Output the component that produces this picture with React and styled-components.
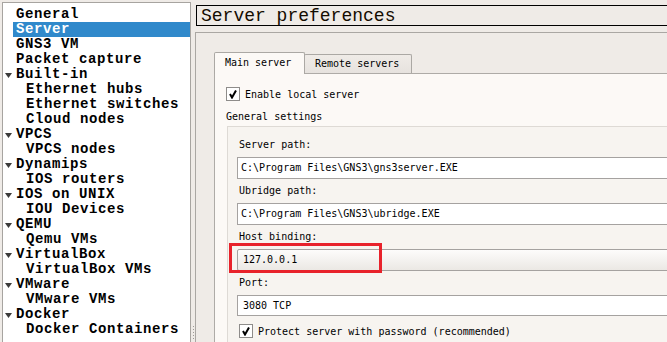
import React from 'react';
import styled, { createGlobalStyle } from 'styled-components';

const GlobalStyle = createGlobalStyle`
  html, body {
    margin: 0;
    padding: 0;
    background: #efebe7;
    overflow: hidden;
  }
  #root {
    width: 667px;
    height: 342px;
    overflow: hidden;
  }
`;

const Window = styled.div`
  display: flex;
  width: 667px;
  height: 342px;
  box-sizing: border-box;
  padding: 2px 0 0 2px;
  overflow: hidden;
  background: #efebe7;
  font-family: 'DejaVu Sans Mono', monospace;
  font-size: 10px;
  color: #000;
`;

const Tree = styled.ul`
  flex: 0 0 189px;
  height: 400px;
  box-sizing: border-box;
  margin: 0;
  padding: 4px 0 0;
  list-style: none;
  background: #fff;
  border: 1px solid #a7a4a0;
  font-family: 'Liberation Mono', monospace;
  font-weight: bold;
  font-size: 14px;
  letter-spacing: 0.6px;
`;

const TreeRow = styled.li`
  display: flex;
  height: 15px;
  padding-left: ${({ $level }) => $level * 10}px;
`;

const Toggle = styled.span`
  flex: 0 0 10px;
  display: flex;
  align-items: center;
  justify-content: center;
  padding-top: 1px;
  box-sizing: border-box;
`;

const ItemLabel = styled.span`
  flex: 1;
  padding-left: 3px;
  line-height: 15px;
  white-space: nowrap;
  background: ${({ $selected }) => ($selected ? '#3089cb' : 'transparent')};
  color: ${({ $selected }) => ($selected ? '#fff' : '#000')};
`;

const Splitter = styled.div`
  flex: 0 0 4px;
  display: flex;
  flex-direction: column;
  align-items: center;
  justify-content: flex-end;
  gap: 2px;
  padding-bottom: 3px;
  box-sizing: border-box;
`;

const GripDot = styled.span`
  width: 1px;
  height: 1px;
  background: #9d9a96;
`;

const RightPane = styled.div`
  flex: 0 0 auto;
  display: flex;
  flex-direction: column;
  width: 720px;
`;

const Title = styled.div`
  height: 21px;
  box-sizing: border-box;
  margin: 3px 0 0 1px;
  padding-left: 4px;
  border: 1px solid #000;
  font-family: 'Liberation Mono', monospace;
  font-size: 18px;
  line-height: 20px;
  color: #140c00;
  white-space: nowrap;
`;

const Frame = styled.div`
  flex: 1;
  margin-top: 6px;
  padding: 19px 0 0 18px;
  border-top: 1px solid #aaa7a3;
  border-left: 1px solid #aaa7a3;
  display: flex;
  flex-direction: column;
`;

const TabBar = styled.div`
  display: flex;
  align-items: flex-end;
  height: 21px;
`;

const Tab = styled.div`
  position: relative;
  z-index: ${({ $active }) => ($active ? 1 : 0)};
  width: ${({ $width }) => $width}px;
  height: ${({ $active }) => ($active ? 22 : 19)}px;
  margin-bottom: ${({ $active }) => ($active ? -1 : 0)}px;
  margin-left: ${({ $active }) => ($active ? 0 : -1)}px;
  box-sizing: border-box;
  padding-left: 10px;
  border: 1px solid #aba8a4;
  border-bottom: none;
  border-radius: 2px 2px 0 0;
  background: ${({ $active }) =>
    $active ? '#fcf9f6' : 'linear-gradient(#efebe7, #e6e2de)'};
  line-height: ${({ $active }) => ($active ? 20 : 18)}px;
  white-space: nowrap;
`;

const TabPane = styled.div`
  flex: 1;
  display: flex;
  flex-direction: column;
  padding: 13px 0 0 11px;
  border-top: 1px solid #aeaba7;
  border-left: 1px solid #aeaba7;
  background: #fcf9f6;
`;

const CheckRow = styled.label`
  display: flex;
  align-items: center;
  gap: 5px;
  height: ${({ $height }) => $height}px;
  margin-left: ${({ $indent }) => $indent || 0}px;
  white-space: nowrap;
`;

const CheckBox = styled.span`
  width: 14px;
  height: 14px;
  box-sizing: border-box;
  display: flex;
  align-items: center;
  justify-content: center;
  border: 1px solid #8e8c8a;
  background: #fff;
`;

const SectionLabel = styled.div`
  height: 16px;
  margin-top: 8px;
  line-height: 16px;
`;

const Group = styled.div`
  flex: 1;
  margin: 1px 0 0 1px;
  padding: 6px 0 0 9px;
  border-top: 1px solid #dedad5;
  border-left: 1px solid #dedad5;
  background: #f7f4f0;
`;

const FieldLabel = styled.div`
  height: 24px;
  padding-left: 2px;
  line-height: 24px;
`;

const Field = styled.div`
  position: relative;
  width: 640px;
  height: ${({ $height }) => $height || 22}px;
  box-sizing: border-box;
  padding-left: ${({ $pad }) => $pad}px;
  border: 1px solid #a5a2a0;
  border-radius: ${({ $combo }) => ($combo ? 2 : 0)}px;
  background: ${({ $combo }) =>
    $combo ? 'linear-gradient(#fdfcfb, #ebe8e4)' : '#fff'};
  line-height: ${({ $height }) => ($height || 22) - 2}px;
  white-space: nowrap;
`;

const Highlight = styled.div`
  position: absolute;
  left: -9px;
  top: -7px;
  width: 153px;
  height: 30px;
  box-sizing: border-box;
  border: 3px solid #e8222b;
  pointer-events: none;
`;

const Arrow = () => (
  <svg width="7" height="5" viewBox="0 0 7 5">
    <polygon points="0,0 7,0 3.5,5" fill="#3c3c3c" />
  </svg>
);

const Check = () => (
  <svg width="10" height="10" viewBox="0 0 10 10">
    <path d="M2 5 L4 8.5 L8 1.5" fill="none" stroke="#000" strokeWidth="2" />
  </svg>
);

const treeItems = [
  { label: 'General', level: 0 },
  { label: 'Server', level: 0, selected: true },
  { label: 'GNS3 VM', level: 0 },
  { label: 'Packet capture', level: 0 },
  { label: 'Built-in', level: 0, open: true },
  { label: 'Ethernet hubs', level: 1 },
  { label: 'Ethernet switches', level: 1 },
  { label: 'Cloud nodes', level: 1 },
  { label: 'VPCS', level: 0, open: true },
  { label: 'VPCS nodes', level: 1 },
  { label: 'Dynamips', level: 0, open: true },
  { label: 'IOS routers', level: 1 },
  { label: 'IOS on UNIX', level: 0, open: true },
  { label: 'IOU Devices', level: 1 },
  { label: 'QEMU', level: 0, open: true },
  { label: 'Qemu VMs', level: 1 },
  { label: 'VirtualBox', level: 0, open: true },
  { label: 'VirtualBox VMs', level: 1 },
  { label: 'VMware', level: 0, open: true },
  { label: 'VMware VMs', level: 1 },
  { label: 'Docker', level: 0, open: true },
  { label: 'Docker Containers', level: 1 },
];

const App = () => {
  return (
    <>
      <GlobalStyle />
      <Window>
        <Tree>
          {treeItems.map((item) => (
            <TreeRow key={item.label} $level={item.level}>
              <Toggle>{item.open && <Arrow />}</Toggle>
              <ItemLabel $selected={item.selected}>{item.label}</ItemLabel>
            </TreeRow>
          ))}
        </Tree>

        <Splitter>
          {[0, 1, 2, 3, 4].map((i) => (
            <GripDot key={i} />
          ))}
        </Splitter>

        <RightPane>
          <Title>Server preferences</Title>
          <Frame>
            <TabBar>
              <Tab $active $width={91}>
                Main server
              </Tab>
              <Tab $width={108}>Remote servers</Tab>
            </TabBar>
            <TabPane>
              <CheckRow $height={14}>
                <CheckBox>
                  <Check />
                </CheckBox>
                Enable local server
              </CheckRow>
              <SectionLabel>General settings</SectionLabel>
              <Group>
                <FieldLabel>Server path:</FieldLabel>
                <Field $pad={3}>C:\Program Files\GNS3\gns3server.EXE</Field>
                <FieldLabel>Ubridge path:</FieldLabel>
                <Field $pad={3}>C:\Program Files\GNS3\ubridge.EXE</Field>
                <FieldLabel>Host binding:</FieldLabel>
                <Field $pad={5} $combo>
                  127.0.0.1
                  <Highlight />
                </Field>
                <FieldLabel>Port:</FieldLabel>
                <Field $pad={5} $height={21}>
                  3080 TCP
                </Field>
                <CheckRow $height={30} $indent={2}>
                  <CheckBox>
                    <Check />
                  </CheckBox>
                  Protect server with password (recommended)
                </CheckRow>
              </Group>
            </TabPane>
          </Frame>
        </RightPane>
      </Window>
    </>
  );
};

export default App;
